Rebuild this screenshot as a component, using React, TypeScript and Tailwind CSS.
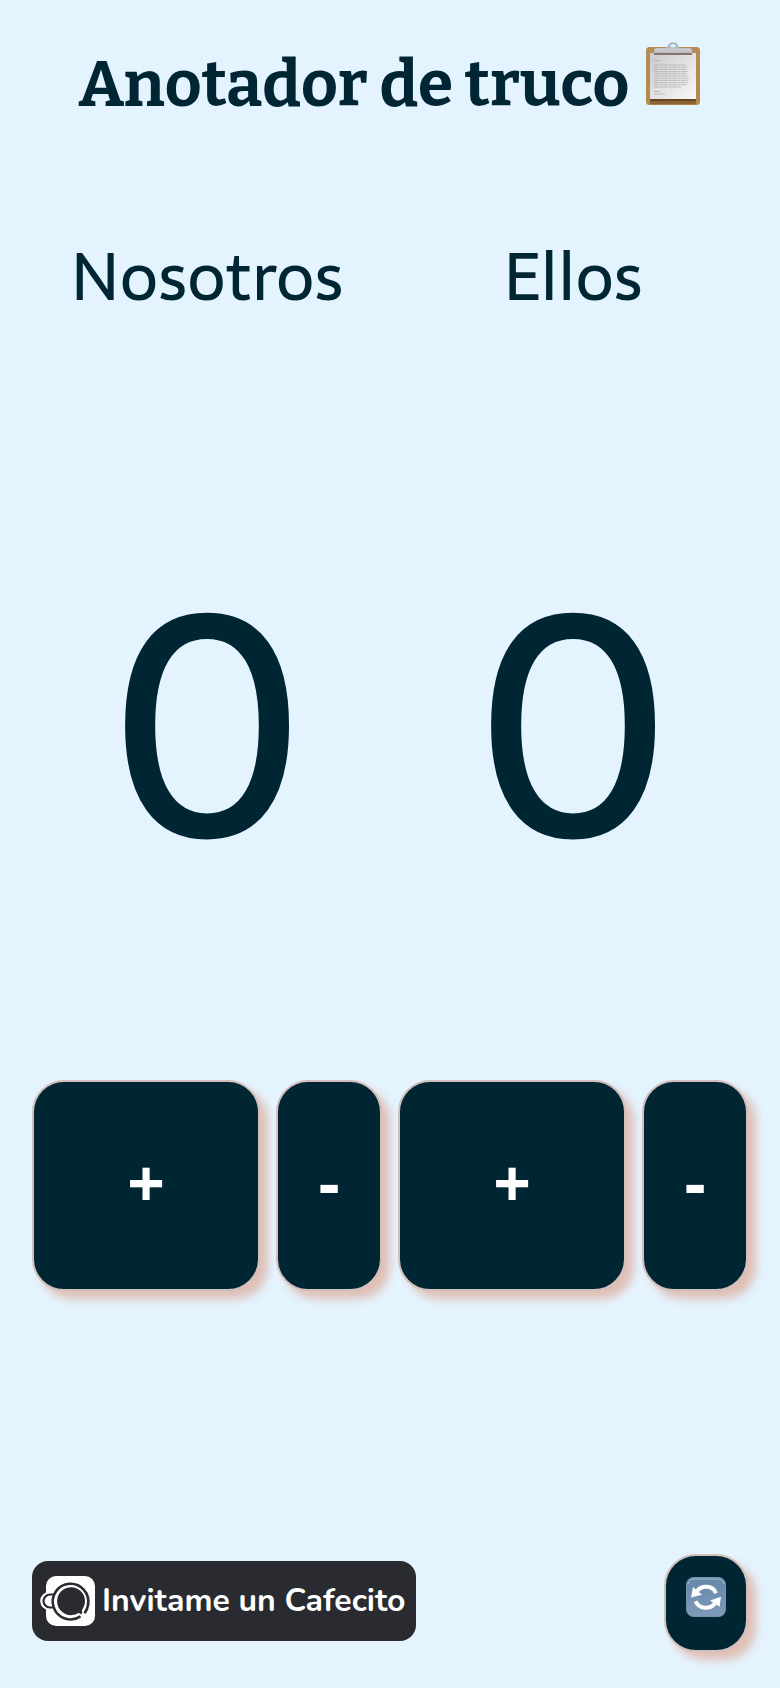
import { useState } from "react";

function ClipboardIcon() {
  return (
    <svg viewBox="0 0 56 64" className="h-16 w-14 shrink-0" role="img" aria-label="Anotador">
      <defs>
        <linearGradient id="board" x1="0" y1="0" x2="0" y2="1">
          <stop offset="0" stopColor="#b58d55" />
          <stop offset="1" stopColor="#b58949" />
        </linearGradient>
        <linearGradient id="paper" x1="0" y1="0" x2="1" y2="1">
          <stop offset="0" stopColor="#cbcbce" />
          <stop offset="1" stopColor="#f8f8f9" />
        </linearGradient>
        <linearGradient id="clip" x1="0" y1="0" x2="0" y2="1">
          <stop offset="0" stopColor="#b4bccb" />
          <stop offset="0.6" stopColor="#c9cacf" />
          <stop offset="1" stopColor="#b9babf" />
        </linearGradient>
      </defs>
      <rect x="1" y="5" width="54" height="58" rx="3.5" fill="url(#board)" />
      <path d="M5 57h46v5.200H5z" fill="#8b6433" />
      <path d="M5 58l3-1.500h40l3 1.500v1H5z" fill="#684720" />
      <rect x="5" y="11" width="46" height="46" fill="url(#paper)" />
      <path d="M9 10.500h38v2.500H9z" fill="#85746e" />
      <path d="M9 11V9q0-3 3-3h8.500q1.500 0 2-1.500h10.500q.5 1.500 2 1.500H44q3 0 3 3v2z" fill="url(#clip)" />
      <path d="M23.500 5.500Q24 1.200 28 1.200t4.500 4.300" fill="none" stroke="#9ba8bd" strokeWidth="1.600" />
      <circle cx="28" cy="3.800" r="1.500" fill="#e4f4ff" />
      <g stroke="#ababae" strokeWidth="0.700">
        <path d="M9 18.500h7" />
        <path d="M9 23h32M9 25.200h34M9 27.400h33M9 29.600h34M9 31.800h32M9 34h34M9 36.200h35M9 38.400h34M9 40.600h34M9 42.800h33M9 45h27" strokeDasharray="5 .6 3 .5" />
        <path d="M9 49.500h6M9 52h11" />
      </g>
    </svg>
  );
}

function RefreshIcon() {
  return (
    <svg viewBox="0 0 40 40" className="h-10 w-10" aria-hidden="true">
      <defs>
        <linearGradient id="tile" x1="0" y1="0" x2="0" y2="1">
          <stop offset="0" stopColor="#6587aa" />
          <stop offset="1" stopColor="#7f9abb" />
        </linearGradient>
      </defs>
      <rect x="0.500" y="0.500" width="39" height="39" rx="7" fill="url(#tile)" stroke="#7890a8" />
      <path d="M2 7q1-5 6-5h24q5 0 6 5" fill="none" stroke="#a9bfd2" strokeWidth="1" />
      <g fill="none" stroke="#fff" strokeWidth="4">
        <path d="M30 16.200C27 8.500 16 7.500 11 14" />
        <path d="M9.500 24.200C13 32 24 33 29 26.200" />
      </g>
      <path d="M7 10l-2 10.500 11-2.800z" fill="#fff" />
      <path d="M24 23.500l11-3.700-1.500 10z" fill="#fff" />
    </svg>
  );
}

function CafecitoIcon() {
  return (
    <svg viewBox="0 0 56 52" className="h-[52px] w-14 shrink-0" aria-hidden="true">
      <rect x="6" y="1" width="49" height="50" rx="10" fill="#fff" />
      <path d="M14 18.500H9.500a7.500 7.500 0 0 0 0 15H14" fill="#fff" stroke="#fff" strokeWidth="3.600" />
      <path d="M15 19.500H10a6.500 6.500 0 0 0 0 13h5" fill="#fff" stroke="#292b30" strokeWidth="2.200" />
      <path d="M40.500 41.300A17.800 17.800 0 1 1 48 30" fill="#fff" stroke="#292b30" strokeWidth="2.600" />
      <path d="M42.500 34.200A14 14 0 1 0 38.500 38q1.800.3 2.600 1.400l1.200-1.600q-.9-1.700.2-3.600z" fill="#292b30" />
      <path d="M44.500 38.200Q47.500 34.500 48.300 29" fill="none" stroke="#292b30" strokeWidth="2.600" />
    </svg>
  );
}

const raised =
  "flex items-center justify-center border-2 border-[#d2c0bd] bg-[#002533] text-white shadow-[8px_8px_10px_#dfbfb6] rounded-[32px]";

function Team({ name }: { name: string }) {
  const [points, setPoints] = useState(0);
  return (
    <section className="flex flex-1 flex-col font-['Sarala','Noto_Sans',sans-serif]" aria-label={name}>
      <h2 className="text-center text-[67px] leading-[80px] font-medium">{name}</h2>
      <output className="mt-[168px] text-center text-[314px] leading-[480px]">{points}</output>
      <div className="mt-[115px] grid grid-cols-[228fr_106fr] gap-4 font-['Open_Sans','Noto_Sans',sans-serif] text-[66px] font-bold">
        <button type="button" className={`${raised} h-[211px] pb-2`} onClick={() => setPoints(points + 1)}>
          +
        </button>
        <button type="button" className={`${raised} h-[211px] pb-2`} onClick={() => setPoints(Math.max(0, points - 1))}>
          -
        </button>
      </div>
    </section>
  );
}

export default function App() {
  const [round, setRound] = useState(0);
  return (
    <div className="flex min-h-screen flex-col bg-[#e4f4ff] px-8 pt-[42px] pb-9 text-[#002533]">
      <header className="flex justify-center gap-4">
        <h1 className="pt-[3px] font-['Bitter','DejaVu_Serif_Condensed',serif] text-[64px] leading-[80px] font-bold whitespace-nowrap">
          Anotador de truco
        </h1>
        <ClipboardIcon />
      </header>
      <main key={round} className="mt-28 flex gap-4">
        <Team name="Nosotros" />
        <Team name="Ellos" />
      </main>
      <footer className="mt-auto flex items-start justify-between">
        <a
          href="#cafecito"
          className="mt-[7px] flex h-20 items-center gap-1.5 rounded-2xl bg-[#292b30] pr-2.5 pl-2 font-['Nunito','Lato',sans-serif] text-[32px] font-bold whitespace-nowrap text-white"
        >
          <CafecitoIcon />
          Invitame un Cafecito
        </a>
        <button
          type="button"
          aria-label="Reiniciar"
          className={`${raised} h-[98px] w-[84px] pb-3`}
          onClick={() => setRound(round + 1)}
        >
          <RefreshIcon />
        </button>
      </footer>
    </div>
  );
}
